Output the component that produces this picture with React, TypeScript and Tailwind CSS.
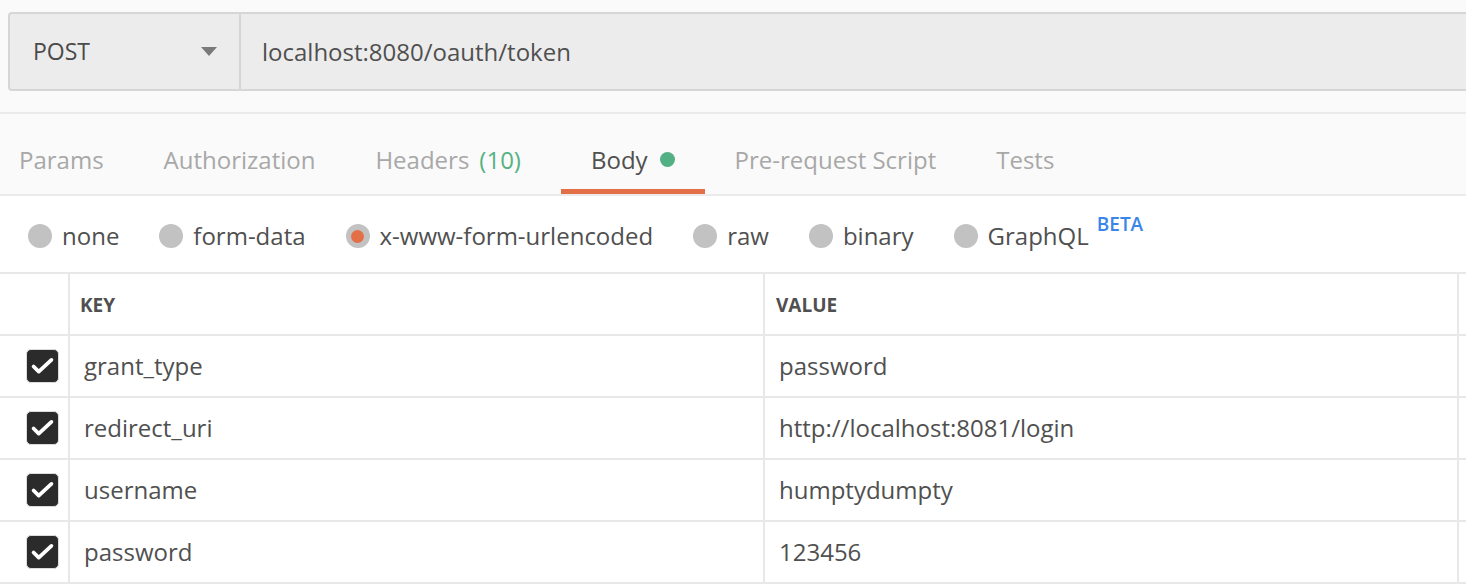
import React from "react";

const tabs = [
  { label: "Params" },
  { label: "Authorization" },
  { label: "Headers", count: "(10)" },
  { label: "Body", active: true, dot: true },
  { label: "Pre-request Script" },
  { label: "Tests" },
];

const bodyTypes = [
  { label: "none" },
  { label: "form-data" },
  { label: "x-www-form-urlencoded", selected: true },
  { label: "raw" },
  { label: "binary" },
  { label: "GraphQL", beta: true },
];

const rows = [
  { key: "grant_type", value: "password" },
  { key: "redirect_uri", value: "http://localhost:8081/login" },
  { key: "username", value: "humptydumpty" },
  { key: "password", value: "123456" },
];

const Checkbox = () => (
  <div className="w-[33px] h-[34px] rounded-[5px] bg-[#2b2b2b] border border-[#dcdcdc] flex items-center justify-center">
    <svg width="33" height="34" viewBox="0 0 33 34">
      <path
        d="M7 17.5 L12.5 23 L26 10.5"
        fill="none"
        stroke="#ffffff"
        strokeWidth="4"
        strokeLinecap="round"
        strokeLinejoin="round"
      />
    </svg>
  </div>
);

export default function App() {
  return (
    <div
      className="w-[1466px] h-[588px] overflow-hidden bg-white text-[#505050]"
      style={{ fontFamily: '"Open Sans", "Noto Sans", sans-serif' }}
    >
      {/* request bar */}
      <div className="h-[114px] bg-[#fafafa] pt-[12px] pl-[8px] border-b-2 border-[#ebebeb] overflow-hidden">
        <div className="w-[1500px] h-[79px] flex rounded-[4px] border-2 border-[#d6d6d6] bg-[#ececec]">
          <div className="w-[231px] flex items-center justify-between pl-[23px] pr-[22px] border-r-2 border-[#d6d6d6]">
            <span className="text-[23px] font-medium text-[#4a4a4a]">POST</span>
            <svg width="16" height="10" viewBox="0 0 16 10">
              <path d="M0 0 H16 L8 9 Z" fill="#7a7a7a" />
            </svg>
          </div>
          <div className="flex items-center pl-[21px] text-[24px] text-[#505050]">
            localhost:8080/oauth/token
          </div>
        </div>
      </div>

      {/* tabs */}
      <div className="h-[82px] bg-[#fafafa] border-b-2 border-[#ebebeb] flex pl-[19px]">
        {tabs.map((t, i) => (
          <div
            key={t.label}
            className={`flex items-center gap-[12px] pt-[16px] text-[24px] ${
              i === 0 ? "pr-[30px]" : t.count ? "pl-[30px] pr-[40px]" : "px-[30px]"
            } ${
              t.active ? "border-b-[5px] border-[#e36f46] text-[#505050]" : "border-b-[5px] border-transparent text-[#a8a8a8]"
            }`}
          >
            <span>
              {t.label}
              {t.count && <span className="text-[#55b283] ml-[10px]">{t.count}</span>}
            </span>
            {t.dot && <span className="w-[15px] h-[15px] rounded-full bg-[#53b085]" />}
          </div>
        ))}
      </div>

      {/* body types */}
      <div className="h-[76px] pt-[4px] pl-[28px] flex items-center gap-[40px]">
        {bodyTypes.map((b) => (
          <div key={b.label} className="flex items-center gap-[10px]">
            <span className="w-[24px] h-[24px] rounded-full bg-[#c2c2c2] flex items-center justify-center">
              {b.selected && <span className="w-[13px] h-[13px] rounded-full bg-[#e36f46]" />}
            </span>
            <span className="text-[24px] text-[#505050]">{b.label}</span>
            {b.beta && (
              <span className="self-start -mt-[8px] ml-[-2px] text-[19px] font-semibold text-[#3a86e8]">BETA</span>
            )}
          </div>
        ))}
      </div>

      {/* key / value table */}
      <div className="border-t-2 border-[#e8e8e8] grid grid-cols-[70px_695px_694px_1fr]">
        <div className="h-[62px] border-r-2 border-b-2 border-[#e8e8e8]" />
        <div className="h-[62px] border-r-2 border-b-2 border-[#e8e8e8] flex items-center pt-[3px] pl-[10px] text-[19px] font-bold text-[#505050]">
          KEY
        </div>
        <div className="h-[62px] border-r-2 border-b-2 border-[#e8e8e8] flex items-center pt-[3px] pl-[11px] text-[19px] font-bold text-[#505050]">
          VALUE
        </div>
        <div className="h-[62px] border-b-2 border-[#e8e8e8]" />

        {rows.map((r) => (
          <React.Fragment key={r.key}>
            <div className="h-[62px] border-r-2 border-b-2 border-[#e8e8e8] flex items-center pl-[26px]">
              <Checkbox />
            </div>
            <div className="h-[62px] border-r-2 border-b-2 border-[#e8e8e8] flex items-center pl-[14px] text-[24px] text-[#505050]">
              {r.key}
            </div>
            <div className="h-[62px] border-r-2 border-b-2 border-[#e8e8e8] flex items-center pl-[14px] text-[24px] text-[#505050]">
              {r.value}
            </div>
            <div className="h-[62px] border-b-2 border-[#e8e8e8]" />
          </React.Fragment>
        ))}
      </div>
    </div>
  );
}
